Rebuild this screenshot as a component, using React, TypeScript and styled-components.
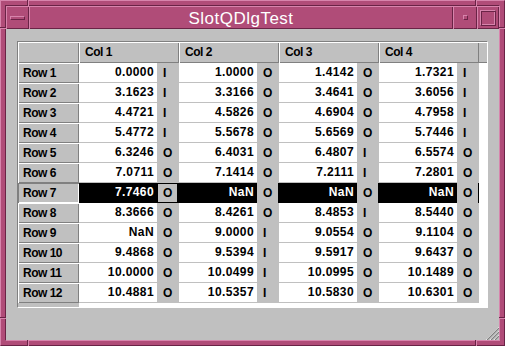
import React from 'react';
import styled, { createGlobalStyle, css } from 'styled-components';

const PINK = '#b04c78';
const PINK_L = '#d784ac';
const PINK_D = '#6a2346';
const GRAY = '#c0c0c0';
const SHADOW = '#808080';

const Global = createGlobalStyle`
  html, body { margin: 0; padding: 0; background: ${GRAY}; }
  body { width: 505px; height: 346px; overflow: hidden; }
  * { box-sizing: border-box; }
`;

const Window = styled.div`
  position: relative;
  width: 505px;
  height: 346px;
  background: ${PINK};
  border: 1px solid;
  border-color: ${PINK_L} ${PINK_D} ${PINK_D} ${PINK_L};
  padding: 4px;
  display: flex;
`;

const Inner = styled.div`
  flex: 1;
  display: flex;
  flex-direction: column;
  border: 1px solid;
  border-color: ${PINK_D} ${PINK_L} ${PINK_L} ${PINK_D};
`;

const TitleBar = styled.div`
  height: 23px;
  display: flex;
  background: ${PINK};
`;

const bevel = css`
  box-shadow: inset 1px 1px ${PINK_L}, inset -1px -1px ${PINK_D};
`;

const TitleButton = styled.div<{ $w: number }>`
  width: ${(p) => p.$w}px;
  height: 23px;
  ${bevel};
  display: flex;
  align-items: center;
  justify-content: center;
`;

const TitleText = styled.div`
  flex: 1;
  height: 23px;
  ${bevel};
  color: #ffffff;
  font-family: 'Liberation Sans', Arial, sans-serif;
  font-size: 17px;
  letter-spacing: 0.5px;
  line-height: 23px;
  text-align: center;
  padding-top: 1px;
`;

const MenuBar = styled.div`
  width: 15px;
  height: 4px;
  background: ${PINK};
  border: 1px solid;
  border-color: ${PINK_L} ${PINK_D} ${PINK_D} ${PINK_L};
`;

const MinDot = styled.div`
  width: 5px;
  height: 5px;
  background: ${PINK};
  border: 1px solid;
  border-color: ${PINK_L} ${PINK_D} ${PINK_D} ${PINK_L};
`;

const MaxBox = styled.div`
  width: 16px;
  height: 16px;
  border: 1px solid;
  border-color: ${PINK_L} ${PINK_D} ${PINK_D} ${PINK_L};
  box-shadow: inset 1px 1px ${PINK_D}, inset -1px -1px ${PINK_L};
`;

const Notch = styled.span<{ $top?: number; $left?: number; $bottom?: number; $right?: number; $vertical: boolean }>`
  position: absolute;
  ${(p) => (p.$top !== undefined ? `top: ${p.$top}px;` : '')}
  ${(p) => (p.$left !== undefined ? `left: ${p.$left}px;` : '')}
  ${(p) => (p.$bottom !== undefined ? `bottom: ${p.$bottom}px;` : '')}
  ${(p) => (p.$right !== undefined ? `right: ${p.$right}px;` : '')}
  ${(p) =>
    p.$vertical
      ? `width: 2px; height: 6px; border-left: 1px solid ${PINK_D}; border-right: 1px solid ${PINK_L};`
      : `width: 6px; height: 2px; border-top: 1px solid ${PINK_D}; border-bottom: 1px solid ${PINK_L};`}
`;

const Content = styled.div`
  position: relative;
  flex: 1;
  background: ${GRAY};
  padding: 12px 11px 0 11px;
`;

const TableFrame = styled.div`
  width: 471px;
  height: 267px;
  border: 1px solid;
  border-color: ${SHADOW} #ffffff #ffffff ${SHADOW};
  background: #ffffff;
  display: grid;
  grid-template-columns: 61px repeat(4, 100px) 8px;
  grid-template-rows: 21px repeat(12, 20px) 4px;
  font-family: 'Liberation Sans', Arial, sans-serif;
  font-weight: bold;
  font-size: 12px;
  color: #000;
`;

const HeaderSection = styled.div`
  background: ${GRAY};
  box-shadow: inset 1px 1px #ffffff, inset -1px -1px ${SHADOW};
  padding-left: 6px;
  line-height: 21px;
  letter-spacing: -0.5px;
  white-space: nowrap;
`;

const HeaderFiller = styled.div`
  background: ${GRAY};
  box-shadow: inset 0 1px #ffffff, inset 0 -1px ${SHADOW};
`;

const RowHeader = styled.div<{ $current?: boolean }>`
  background: ${GRAY};
  box-shadow: ${(p) =>
    p.$current
      ? `inset 1px 1px ${SHADOW}, inset -1px -1px #ffffff`
      : `inset 1px 1px #ffffff, inset -1px -1px ${SHADOW}`};
  padding-left: 5px;
  line-height: 20px;
  letter-spacing: -0.5px;
  white-space: nowrap;
`;

const RowHeaderFiller = styled.div`
  background: ${GRAY};
`;

const DataCell = styled.div<{ $selected?: boolean }>`
  display: flex;
  height: 20px;
  border-right: 1px solid ${(p) => (p.$selected ? '#000' : GRAY)};
`;

const Value = styled.div<{ $selected?: boolean }>`
  width: 78px;
  height: 20px;
  background: ${(p) => (p.$selected ? '#000' : '#fff')};
  color: ${(p) => (p.$selected ? '#fff' : '#000')};
  border-bottom: 1px solid ${(p) => (p.$selected ? '#000' : GRAY)};
  text-align: right;
  padding-right: 3px;
  line-height: 19px;
  letter-spacing: 0.4px;
  white-space: nowrap;
`;

const Flag = styled.div<{ $focus?: boolean }>`
  width: 21px;
  height: 20px;
  background: ${GRAY};
  padding-left: ${(p) => (p.$focus ? 5 : 6)}px;
  line-height: ${(p) => (p.$focus ? 18 : 20)}px;
  border: ${(p) => (p.$focus ? '1px solid #000' : 'none')};
`;

const Grip = styled.svg`
  position: absolute;
  right: 0;
  bottom: 0;
`;

type Cell = [string, string];

const DATA: Cell[][] = [
  [['0.0000', 'I'], ['1.0000', 'O'], ['1.4142', 'O'], ['1.7321', 'I']],
  [['3.1623', 'I'], ['3.3166', 'O'], ['3.4641', 'O'], ['3.6056', 'I']],
  [['4.4721', 'I'], ['4.5826', 'O'], ['4.6904', 'O'], ['4.7958', 'I']],
  [['5.4772', 'I'], ['5.5678', 'O'], ['5.6569', 'O'], ['5.7446', 'I']],
  [['6.3246', 'O'], ['6.4031', 'O'], ['6.4807', 'I'], ['6.5574', 'O']],
  [['7.0711', 'O'], ['7.1414', 'O'], ['7.2111', 'I'], ['7.2801', 'O']],
  [['7.7460', 'O'], ['NaN', 'O'], ['NaN', 'O'], ['NaN', 'O']],
  [['8.3666', 'O'], ['8.4261', 'O'], ['8.4853', 'I'], ['8.5440', 'O']],
  [['NaN', 'O'], ['9.0000', 'I'], ['9.0554', 'O'], ['9.1104', 'O']],
  [['9.4868', 'O'], ['9.5394', 'I'], ['9.5917', 'O'], ['9.6437', 'O']],
  [['10.0000', 'O'], ['10.0499', 'I'], ['10.0995', 'O'], ['10.1489', 'O']],
  [['10.4881', 'O'], ['10.5357', 'I'], ['10.5830', 'O'], ['10.6301', 'O']],
];

const CURRENT_ROW = 6;
const CURRENT_COL = 0;

export default function App() {
  return (
    <>
      <Global />
      <Window>
        <Notch $vertical $top={-1} $left={26} />
        <Notch $vertical $top={-1} $right={27} />
        <Notch $vertical $bottom={-1} $left={26} />
        <Notch $vertical $bottom={-1} $right={27} />
        <Notch $vertical={false} $top={26} $left={-1} />
        <Notch $vertical={false} $top={26} $right={-1} />
        <Notch $vertical={false} $bottom={26} $left={-1} />
        <Notch $vertical={false} $bottom={26} $right={-1} />
        <Inner>
          <TitleBar>
            <TitleButton $w={23}>
              <MenuBar />
            </TitleButton>
            <TitleText>SlotQDlgTest</TitleText>
            <TitleButton $w={24}>
              <MinDot />
            </TitleButton>
            <TitleButton $w={22}>
              <MaxBox />
            </TitleButton>
          </TitleBar>
          <Content>
            <TableFrame>
              <HeaderSection />
              {[1, 2, 3, 4].map((c) => (
                <HeaderSection key={c}>Col {c}</HeaderSection>
              ))}
              <HeaderFiller />
              {DATA.map((row, r) => (
                <React.Fragment key={r}>
                  <RowHeader $current={r === CURRENT_ROW}>Row {r + 1}</RowHeader>
                  {row.map(([v, f], c) => {
                    const sel = r === CURRENT_ROW;
                    return (
                      <DataCell key={c} $selected={sel}>
                        <Value $selected={sel}>{v}</Value>
                        <Flag $focus={sel && c === CURRENT_COL}>{f}</Flag>
                      </DataCell>
                    );
                  })}
                  <div />
                </React.Fragment>
              ))}
              <RowHeaderFiller />
            </TableFrame>
            <Grip width="14" height="14" viewBox="0 0 14 14">
              {[0, 4, 8].map((o) => (
                <g key={o}>
                  <line x1={o + 1} y1="14" x2="14" y2={o + 1} stroke="#ffffff" strokeWidth="1" />
                  <line x1={o + 2} y1="14" x2="14" y2={o + 2} stroke={SHADOW} strokeWidth="1.2" />
                </g>
              ))}
            </Grip>
          </Content>
        </Inner>
      </Window>
    </>
  );
}
